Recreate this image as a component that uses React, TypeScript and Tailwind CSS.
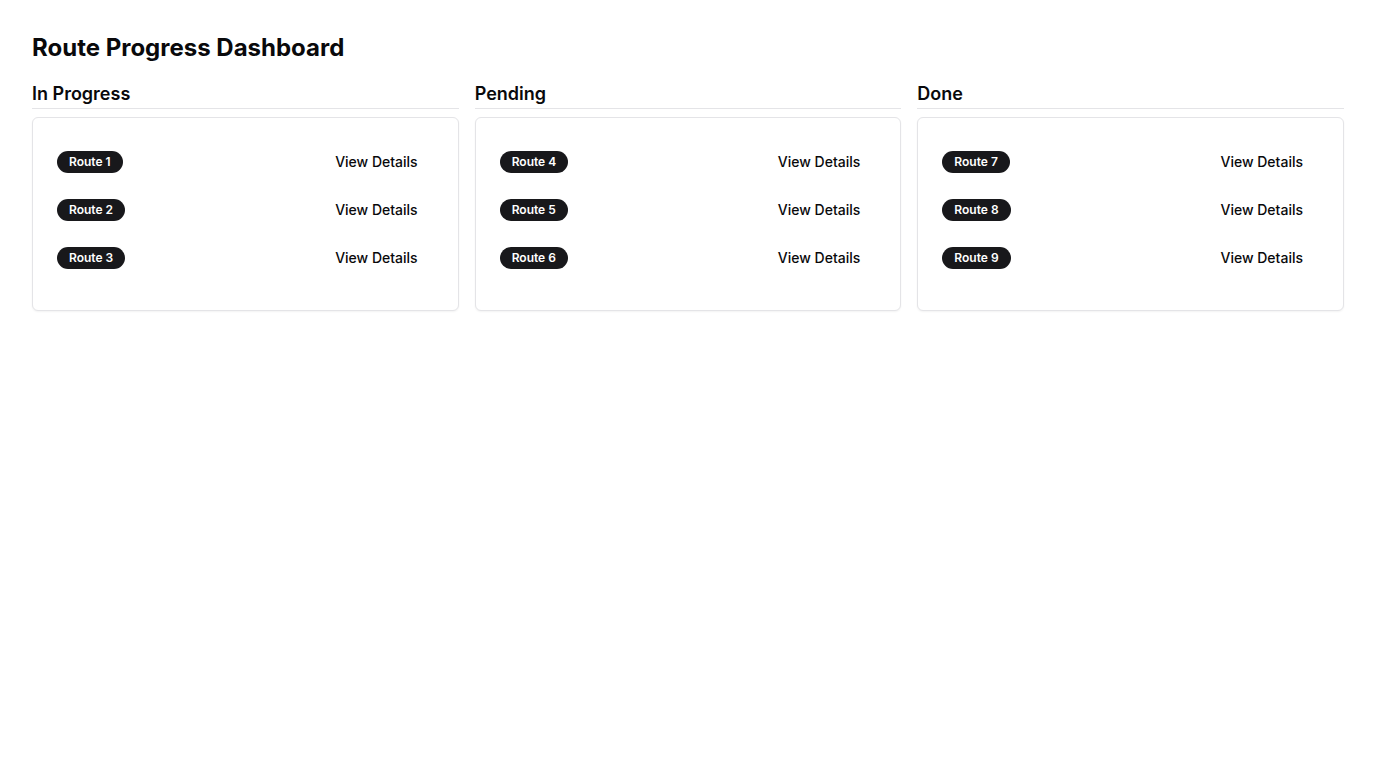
const columns = [
  { title: 'In Progress', routes: ['Route 1', 'Route 2', 'Route 3'] },
  { title: 'Pending', routes: ['Route 4', 'Route 5', 'Route 6'] },
  { title: 'Done', routes: ['Route 7', 'Route 8', 'Route 9'] },
]

export default function App() {
  return (
    <div className="min-h-screen bg-white px-8 pt-8 text-[#09090b]" style={{ fontFamily: 'Inter, "Noto Sans", sans-serif' }}>
      <h1 className="text-2xl leading-8 font-bold mb-4">Route Progress Dashboard</h1>
      <div className="grid grid-cols-3 gap-4">
        {columns.map((col) => (
          <div key={col.title}>
            <h2 className="text-lg leading-7 font-semibold border-b border-[#e4e4e7] mb-2">{col.title}</h2>
            <div className="rounded-md border border-[#e4e4e7] shadow-xs bg-white px-6 pt-6 pb-8">
              <div className="flex flex-col gap-2">
                {col.routes.map((r) => (
                  <div key={r} className="flex items-center justify-between h-10">
                    <span className="inline-flex items-center rounded-full bg-[#18181b] px-3 h-[22px] text-xs font-semibold text-white">
                      {r}
                    </span>
                    <button className="h-10 px-4 text-sm font-medium rounded-md">View Details</button>
                  </div>
                ))}
              </div>
            </div>
          </div>
        ))}
      </div>
    </div>
  )
}
